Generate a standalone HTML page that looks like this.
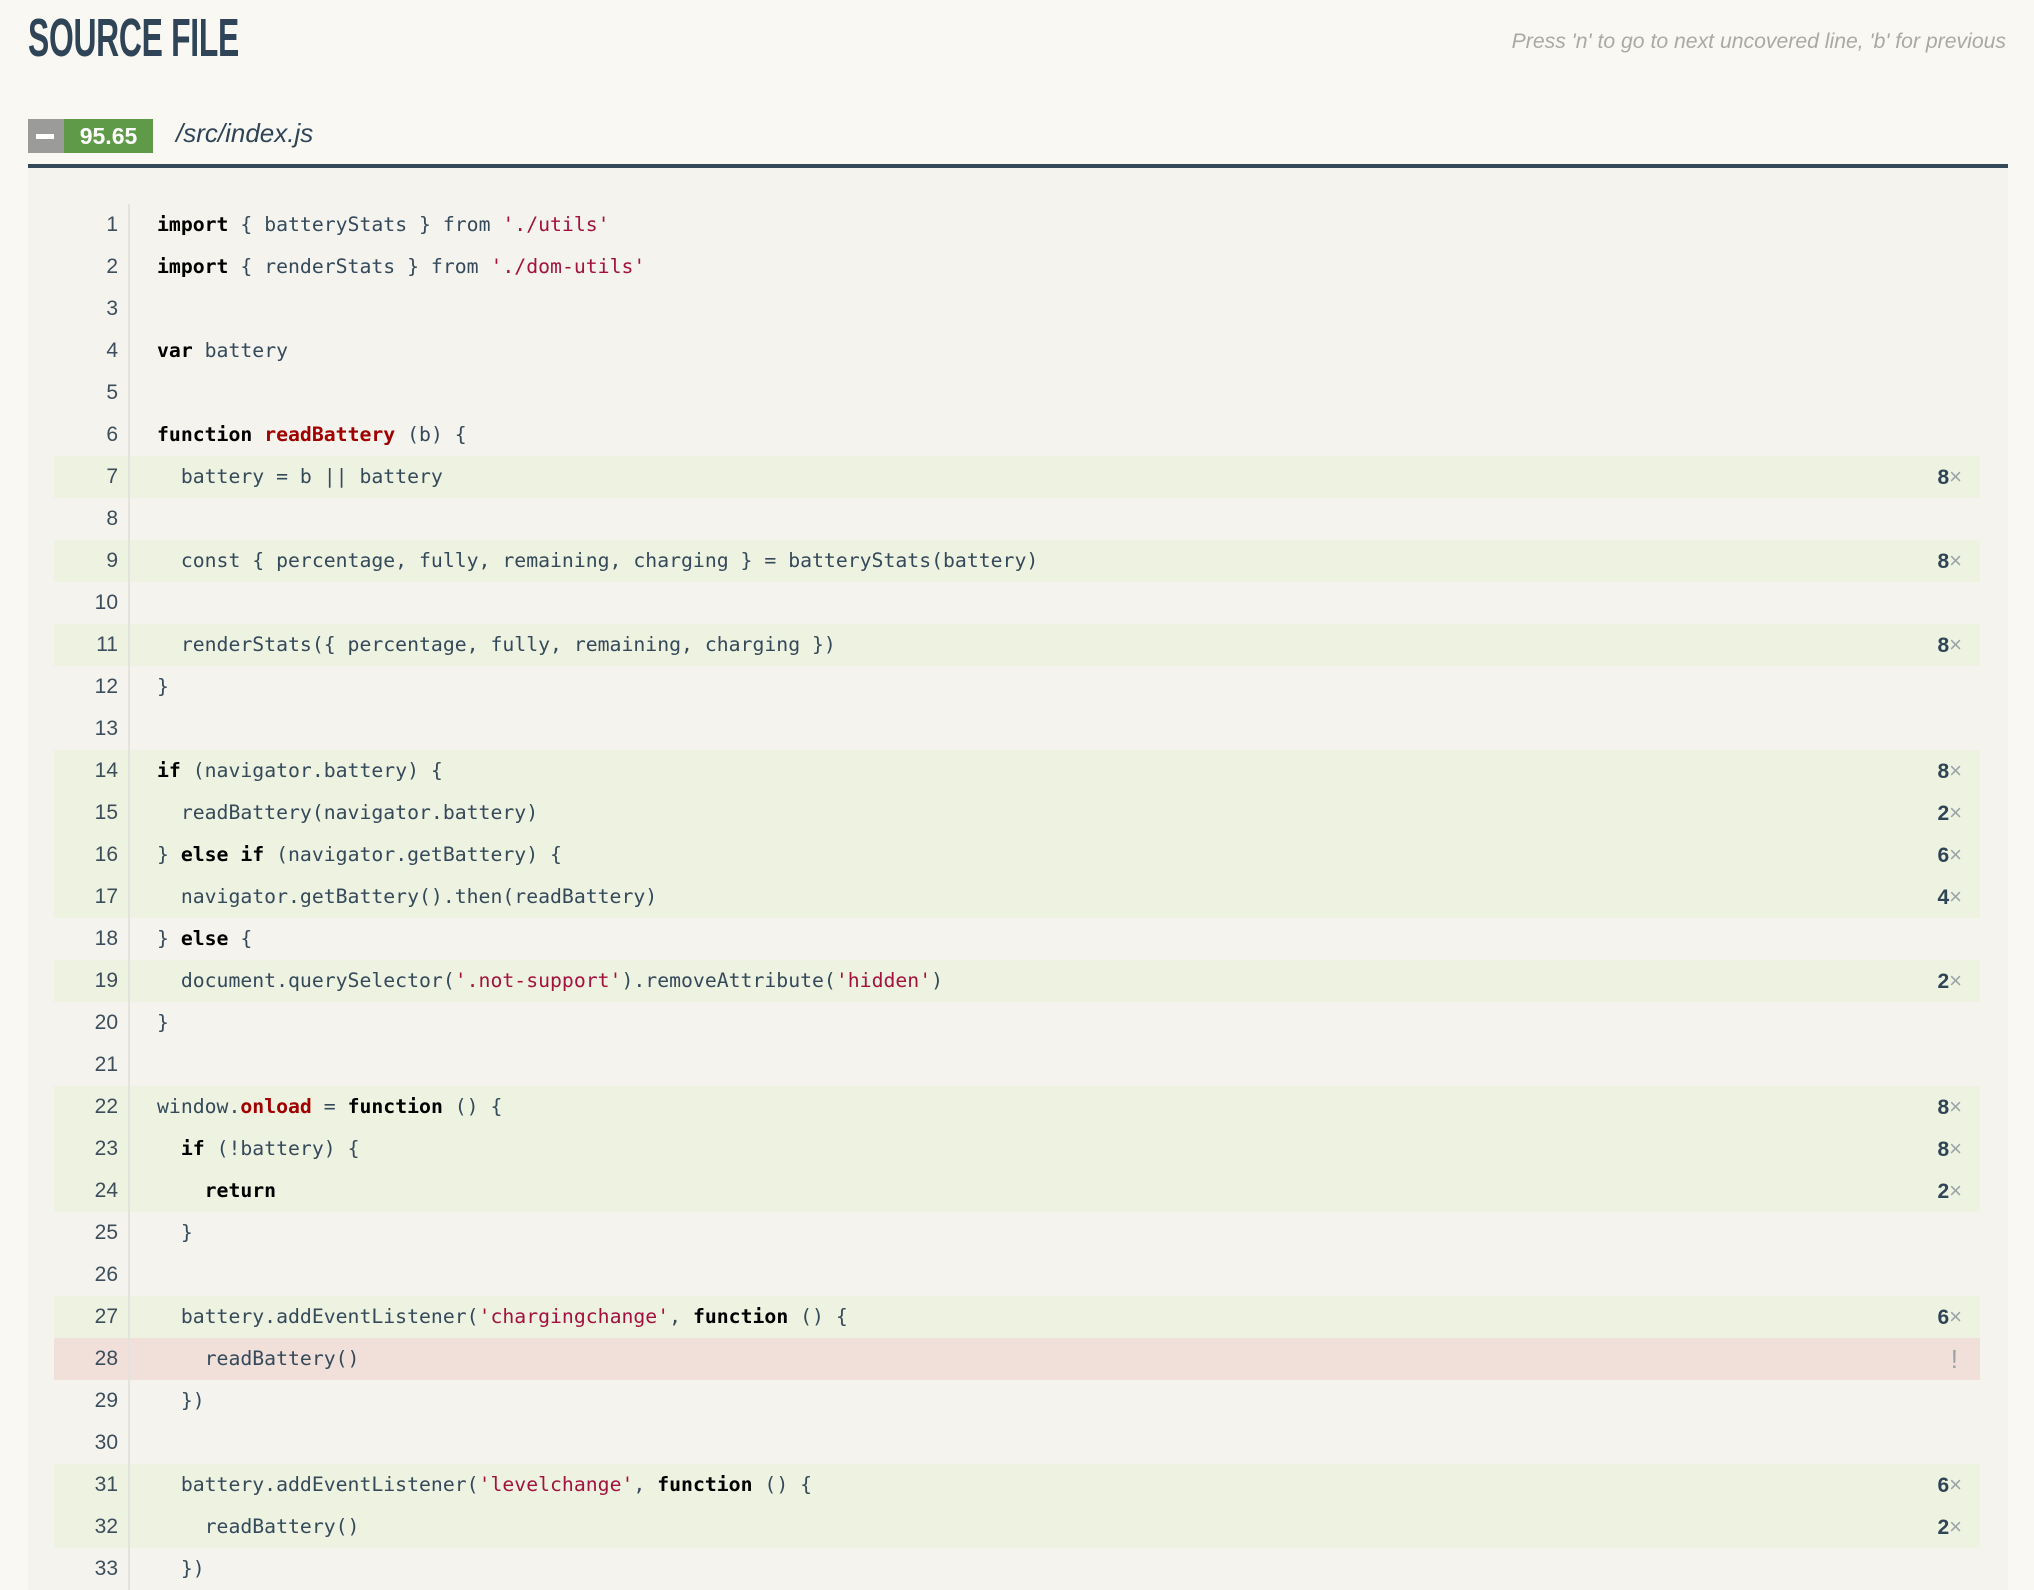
<!DOCTYPE html>
<html><head><meta charset="utf-8"><style>
html,body{margin:0;padding:0}
body{width:2034px;height:1590px;background:#f9f8f3;position:relative;overflow:hidden;font-family:"Liberation Sans",sans-serif}
.title{position:absolute;left:28px;top:7px;font-family:"Liberation Sans Narrow","Liberation Sans",sans-serif;font-weight:bold;font-size:54px;color:#2f4456;letter-spacing:-0.5px;transform:scaleX(0.59);transform-origin:left;white-space:nowrap}
.hint{position:absolute;right:28px;top:30px;font-style:italic;color:#a9a9a6;font-size:21.2px}
.badge{position:absolute;left:28px;top:119px;height:34px;width:125px}
.bg{position:absolute;left:0;top:0;width:36px;height:34px;background:#9b9b99}
.bg:after{content:"";position:absolute;left:8px;top:15px;width:18px;height:5px;background:#fff}
.bgr{position:absolute;left:36px;top:0;width:89px;height:34px;background:#5f9a48;color:#fff;font-weight:bold;font-size:23px;line-height:34px;text-align:center}
.path{position:absolute;left:176px;top:118px;font-style:italic;font-size:26px;color:#2f4456}
.rule{position:absolute;left:28px;top:164px;width:1980px;height:4px;background:#34495a}
.panel{position:absolute;left:28px;top:168px;width:1980px;height:1422px;background:#f4f3ee}
.sep{position:absolute;left:128px;top:204px;width:2px;height:1386px;background:#e3e2dc}
.row{position:absolute;left:54px;width:1926px;height:42px;line-height:42px;font-family:"DejaVu Sans Mono","Liberation Mono",monospace;font-size:19.8px;color:#34495a;white-space:pre}
.g{background:#eef2e1}.r{background:#f1dfd9}
.n{position:absolute;left:0;width:64px;text-align:right;font-family:"Liberation Sans",sans-serif;font-size:21px;color:#3c4d5c}
.c{position:absolute;left:103px}
.h{position:absolute;right:18px;font-family:"Liberation Sans",sans-serif;font-size:21px;font-weight:bold;color:#2f4456}
.h i{font-style:normal;font-weight:normal;color:#9aa3a8;font-size:22px}
b{color:#000}.s{color:#a3123f}.f{color:#a00000;font-weight:bold}
</style></head><body>
<div class="title">SOURCE FILE</div>
<div class="hint">Press 'n' to go to next uncovered line, 'b' for previous</div>
<div class="badge"><div class="bg"></div><div class="bgr">95.65</div></div>
<div class="path">/src/index.js</div>
<div class="rule"></div>
<div class="panel"></div>
<div class="row" style="top:204px"><span class="n">1</span><span class="c"><b>import</b> { batteryStats } from <span class="s">'./utils'</span></span></div>
<div class="row" style="top:246px"><span class="n">2</span><span class="c"><b>import</b> { renderStats } from <span class="s">'./dom-utils'</span></span></div>
<div class="row" style="top:288px"><span class="n">3</span></div>
<div class="row" style="top:330px"><span class="n">4</span><span class="c"><b>var</b> battery</span></div>
<div class="row" style="top:372px"><span class="n">5</span></div>
<div class="row" style="top:414px"><span class="n">6</span><span class="c"><b>function</b> <span class="f">readBattery</span> (b) {</span></div>
<div class="row g" style="top:456px"><span class="n">7</span><span class="c">  battery = b || battery</span><span class="h">8<i>×</i></span></div>
<div class="row" style="top:498px"><span class="n">8</span></div>
<div class="row g" style="top:540px"><span class="n">9</span><span class="c">  const { percentage, fully, remaining, charging } = batteryStats(battery)</span><span class="h">8<i>×</i></span></div>
<div class="row" style="top:582px"><span class="n">10</span></div>
<div class="row g" style="top:624px"><span class="n">11</span><span class="c">  renderStats({ percentage, fully, remaining, charging })</span><span class="h">8<i>×</i></span></div>
<div class="row" style="top:666px"><span class="n">12</span><span class="c">}</span></div>
<div class="row" style="top:708px"><span class="n">13</span></div>
<div class="row g" style="top:750px"><span class="n">14</span><span class="c"><b>if</b> (navigator.battery) {</span><span class="h">8<i>×</i></span></div>
<div class="row g" style="top:792px"><span class="n">15</span><span class="c">  readBattery(navigator.battery)</span><span class="h">2<i>×</i></span></div>
<div class="row g" style="top:834px"><span class="n">16</span><span class="c">} <b>else if</b> (navigator.getBattery) {</span><span class="h">6<i>×</i></span></div>
<div class="row g" style="top:876px"><span class="n">17</span><span class="c">  navigator.getBattery().then(readBattery)</span><span class="h">4<i>×</i></span></div>
<div class="row" style="top:918px"><span class="n">18</span><span class="c">} <b>else</b> {</span></div>
<div class="row g" style="top:960px"><span class="n">19</span><span class="c">  document.querySelector(<span class="s">'.not-support'</span>).removeAttribute(<span class="s">'hidden'</span>)</span><span class="h">2<i>×</i></span></div>
<div class="row" style="top:1002px"><span class="n">20</span><span class="c">}</span></div>
<div class="row" style="top:1044px"><span class="n">21</span></div>
<div class="row g" style="top:1086px"><span class="n">22</span><span class="c">window.<span class="f">onload</span> = <b>function</b> () {</span><span class="h">8<i>×</i></span></div>
<div class="row g" style="top:1128px"><span class="n">23</span><span class="c">  <b>if</b> (!battery) {</span><span class="h">8<i>×</i></span></div>
<div class="row g" style="top:1170px"><span class="n">24</span><span class="c">    <b>return</b></span><span class="h">2<i>×</i></span></div>
<div class="row" style="top:1212px"><span class="n">25</span><span class="c">  }</span></div>
<div class="row" style="top:1254px"><span class="n">26</span></div>
<div class="row g" style="top:1296px"><span class="n">27</span><span class="c">  battery.addEventListener(<span class="s">'chargingchange'</span>, <b>function</b> () {</span><span class="h">6<i>×</i></span></div>
<div class="row r" style="top:1338px"><span class="n">28</span><span class="c">    readBattery()</span><span class="h" style="right:22px"><i style="font-size:26px">!</i></span></div>
<div class="row" style="top:1380px"><span class="n">29</span><span class="c">  })</span></div>
<div class="row" style="top:1422px"><span class="n">30</span></div>
<div class="row g" style="top:1464px"><span class="n">31</span><span class="c">  battery.addEventListener(<span class="s">'levelchange'</span>, <b>function</b> () {</span><span class="h">6<i>×</i></span></div>
<div class="row g" style="top:1506px"><span class="n">32</span><span class="c">    readBattery()</span><span class="h">2<i>×</i></span></div>
<div class="row" style="top:1548px"><span class="n">33</span><span class="c">  })</span></div>
<div class="sep"></div>
</body></html>
